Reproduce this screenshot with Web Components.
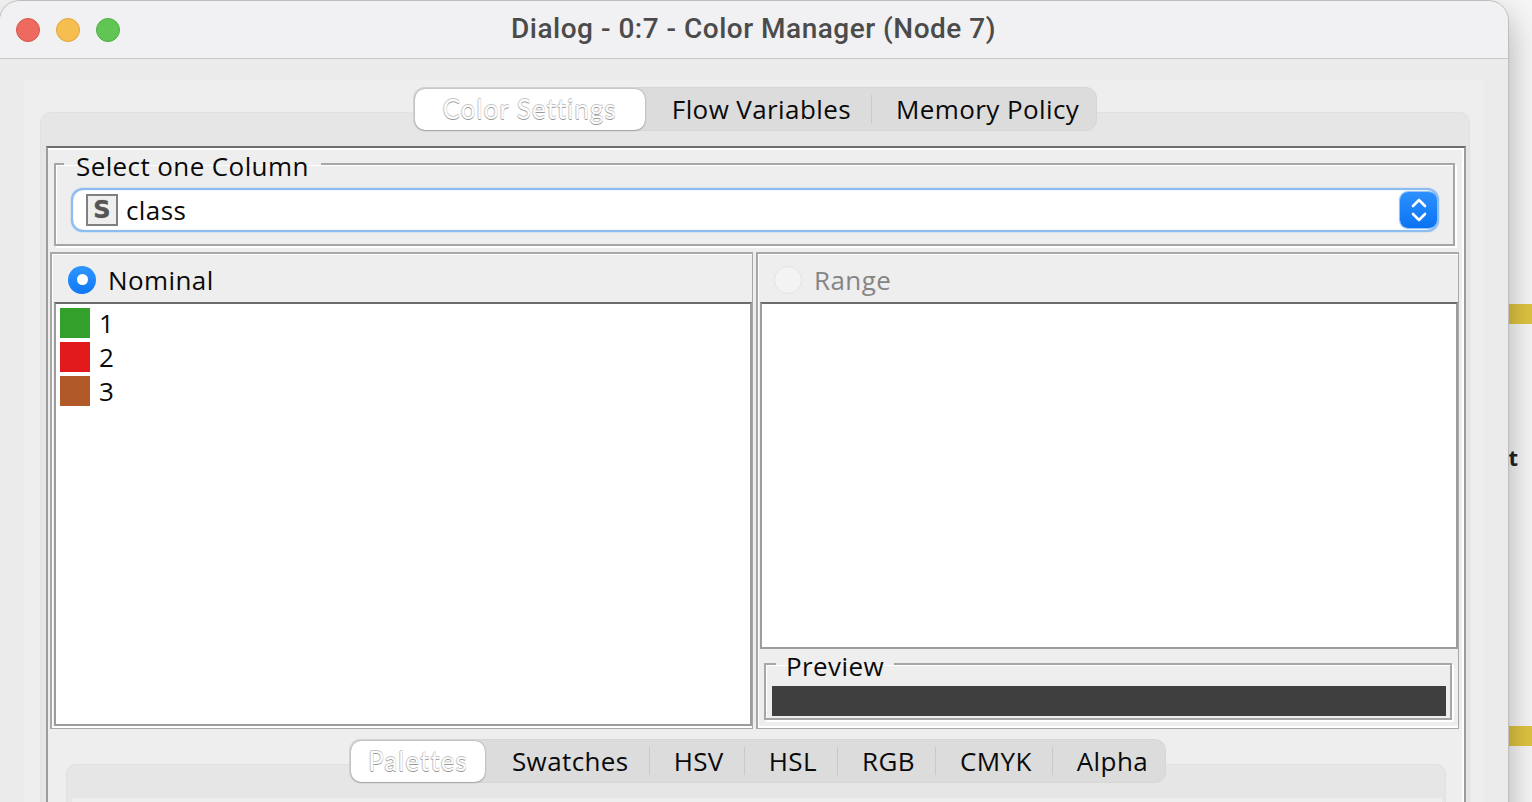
<!DOCTYPE html>
<html lang="en">
<head>
<meta charset="utf-8">
<title>Dialog - 0:7 - Color Manager (Node 7)</title>
<style>
  html, body { margin: 0; height: 802px; overflow: hidden; background: #f6f6f6; }
  body { font: 26px/34px "Open Sans", "Liberation Sans", sans-serif; letter-spacing: 0.4px; color: #0a0a0a; }
</style>
</head>
<body>
<desktop-back>
  <mac-window heading="Dialog - 0:7 - Color Manager (Node 7)">
    <tab-pane tabs="Color Settings|Flow Variables|Memory Policy" selwidth="230" shift="0">
      <inner-frame>
        <group-box label="Select one Column" style="--gl:-7px;--gp:12px;--m:0 9px 0 6px;--pad:9px 14px 12px 15px">
          <column-combo value="class"></column-combo>
        </group-box>
        <split-row>
          <radio-panel label="Nominal" checked>
            <color-row color="#33a02c">1</color-row>
            <color-row color="#e31a1c">2</color-row>
            <color-row color="#b15928">3</color-row>
          </radio-panel>
          <radio-panel label="Range" disabled>
            <group-box slot="footer" label="Preview" style="--gl:4px;--gp:10px;--m:0 6px 6px 4px;--pad:7px 4px 2px 6px">
              <preview-bar></preview-bar>
            </group-box>
          </radio-panel>
        </split-row>
        <tab-pane class="lower" tabs="Palettes|Swatches|HSV|HSL|RGB|CMYK|Alpha" selwidth="134" shift="3" style="margin:10px 18px 0">
          <div style="height:120px;background:#eee"></div>
        </tab-pane>
      </inner-frame>
    </tab-pane>
  </mac-window>
</desktop-back>

<script>
// Fondo de escritorio con restos de otras ventanas a la derecha
class DesktopBack extends HTMLElement {
    constructor() {
        super();
        this.attachShadow({ mode: 'open' });
    }
    connectedCallback() {
        this.shadowRoot.innerHTML = `
            <style>
                :host { display: flex; width: 1532px; height: 802px; overflow: hidden; }
                .main { width: 1508px; flex: none; position: relative; z-index: 1; }
                .side { flex: 1; display: flex; flex-direction: column; overflow: hidden; }
                .bar { height: 20px; background: #dfc441; flex: none; }
                .t { margin: 116px 0 0 -13px; height: 34px; font-weight: 700; font-size: 22px; letter-spacing: 0; color: #222; white-space: nowrap; }
            </style>
            <div class="main"><slot></slot></div>
            <div class="side">
                <div class="bar" style="margin-top:304px"></div>
                <div class="t">ot</div>
                <div class="bar" style="margin-top:252px"></div>
            </div>
        `;
    }
}

// Ventana de macOS con barra de titulo
class MacWindow extends HTMLElement {
    constructor() {
        super();
        this.attachShadow({ mode: 'open' });
    }
    connectedCallback() {
        this.shadowRoot.innerHTML = `
            <style>
                :host {
                    display: block;
                    margin-top: 1px;
                    height: 840px;
                    background: #ebebeb;
                    border-radius: 20px 20px 0 0;
                    box-shadow: 0 0 0 1px #bdbdbd, 0 14px 34px rgba(0, 0, 0, 0.32);
                    overflow: hidden;
                }
                .bar {
                    height: 57px;
                    display: flex;
                    align-items: center;
                    background: #f1f0f2;
                    border-bottom: 1px solid #c9c9c9;
                    padding-left: 16px;
                    gap: 16px;
                }
                .dot { width: 22px; height: 22px; border-radius: 50%; border: 1px solid; }
                .title {
                    flex: 1;
                    margin: -2px 0 0 -137px;
                    text-align: center;
                    font: 500 28px/34px Roboto, sans-serif;
                    letter-spacing: 0.5px;
                    color: #4b4b4b;
                }
                .body { margin: 21px 24px 0; background: #eee; padding-top: 7px; }
            </style>
            <div class="bar">
                <span class="dot" style="background:#ee6a5f;border-color:#d9564b"></span>
                <span class="dot" style="background:#f6be4f;border-color:#dfa63c"></span>
                <span class="dot" style="background:#61c554;border-color:#4fae44"></span>
                <span class="title">${this.getAttribute('heading')}</span>
            </div>
            <div class="body"><slot></slot></div>
        `;
    }
}

// Panel con pestanas segmentadas (Aqua) sobre el borde superior
class TabPane extends HTMLElement {
    constructor() {
        super();
        this.attachShadow({ mode: 'open' });
    }
    connectedCallback() {
        const tabs = this.getAttribute('tabs').split('|');
        const selWidth = this.getAttribute('selwidth');
        const shift = this.getAttribute('shift') || 0;
        const items = tabs.map((name, i) => {
            if (i === 0) return `<span class="tab sel" style="width:${selWidth}px">${name}</span>`;
            const cls = i === tabs.length - 1 ? 'tab last' : (i === 1 ? 'tab first' : 'tab');
            return `<span class="${cls}">${name}</span>`;
        }).join('');
        this.shadowRoot.innerHTML = `
            <style>
                :host { display: block; margin: 0 14px 0 16px; }
                .head { display: flex; justify-content: center; margin-bottom: -19px; position: relative; z-index: 1; padding-left: ${shift}px; }
                .seg {
                    display: flex;
                    align-items: center;
                    height: 40px;
                    padding: 1px;
                    background: #dcdcdc;
                    border: 1px solid #d6d6d6;
                    border-radius: 11px;
                }
                .tab {
                    display: block;
                    padding: 0 20.5px 0 23.5px;
                    border-right: 1px solid #c9c9c9;
                    line-height: 28px;
                    white-space: nowrap;
                }
                .first { padding-left: 27px; }
                .last { padding-right: 16px; border-right: 0; }
                .sel {
                    margin: -1px 0;
                    padding: 0;
                    height: 41px;
                    line-height: 41px;
                    text-align: center;
                    background: #fff;
                    border: 0;
                    border-radius: 10px;
                    box-shadow: 0 0 2px #8a8a8a, 0 1px 1px #b0b0b0;
                    color: #fdfdfd;
                    font-family: Lato, sans-serif;
                    letter-spacing: 1px;
                    text-shadow: 0 1px 0 #999, 0 -1px 0 #c4c4c4, -1px 0 0 #d0d0d0;
                }
                .pane {
                    background: #e6e6e6;
                    border: 1px solid #e1e1e1;
                    border-radius: 10px 10px 0 0;
                    padding: 33px 3px 0 5px;
                }
            </style>
            <div class="head"><div class="seg">${items}</div></div>
            <div class="pane"><slot></slot></div>
        `;
    }
}

// Marco interior con borde hundido
class InnerFrame extends HTMLElement {
    constructor() {
        super();
        this.attachShadow({ mode: 'open' });
    }
    connectedCallback() {
        this.shadowRoot.innerHTML = `
            <style>
                :host {
                    display: block;
                    background: #eee;
                    border: 2px solid #9c9c9c;
                    border-top-color: #6e6e6e;
                    box-shadow: inset 0 2px 0 #fff, inset -2px 0 0 #fff;
                    padding-top: 1px;
                }
            </style>
            <slot></slot>
        `;
    }
}

// Grupo con titulo sobre el borde (fieldset + legend)
class GroupBox extends HTMLElement {
    constructor() {
        super();
        this.attachShadow({ mode: 'open' });
    }
    connectedCallback() {
        this.shadowRoot.innerHTML = `
            <style>
                :host { display: block; margin: var(--m); }
                fieldset {
                    margin: 0;
                    padding: var(--pad);
                    border: 2px solid #a6a6a6;
                    box-shadow: 2px 2px 0 #fff, inset 1px 1px 0 #fff;
                }
                legend {
                    margin-left: var(--gl);
                    padding: 4px var(--gp) 0;
                    line-height: 26px;
                }
            </style>
            <fieldset>
                <legend>${this.getAttribute('label')}</legend>
                <slot></slot>
            </fieldset>
        `;
    }
}

// Combo de columnas con el icono de tipo S y el stepper azul
class ColumnCombo extends HTMLElement {
    constructor() {
        super();
        this.attachShadow({ mode: 'open' });
    }
    connectedCallback() {
        this.shadowRoot.innerHTML = `
            <style>
                :host {
                    display: flex;
                    align-items: center;
                    height: 40px;
                    background: #fff;
                    border: 2px solid #8cbcf0;
                    border-radius: 12px;
                    padding-left: 13px;
                    box-shadow: 0 0 1.5px #8cbcf0, inset 0 0 1px #8cbcf0;
                }
                .type {
                    width: 28px;
                    height: 28px;
                    border: 2px solid #808080;
                    background: #efefef;
                    flex: none;
                    color: #555;
                    font: 700 24px/28px "DejaVu Sans", sans-serif;
                    letter-spacing: 0;
                    text-align: center;
                    text-shadow: 0 0 1px #888;
                }
                .val { flex: 1; margin-left: 8px; }
                .step {
                    width: 37px;
                    height: 36px;
                    border-radius: 8px;
                    background: linear-gradient(#2c90ff, #0a73f2);
                    box-shadow: 0 0 1px 1px #8fbdf0;
                    display: flex;
                    align-items: center;
                    justify-content: center;
                }
            </style>
            <span class="type">S</span>
            <span class="val">${this.getAttribute('value')}</span>
            <span class="step">
                <svg width="16" height="26" viewBox="0 0 16 26" fill="none" stroke="#fff" stroke-width="2.6" stroke-linecap="round" stroke-linejoin="round">
                    <path d="M2 9l6-6 6 6"/><path d="M2 17l6 6 6-6"/>
                </svg>
            </span>
        `;
    }
}

class SplitRow extends HTMLElement {
    constructor() {
        super();
        this.attachShadow({ mode: 'open' });
    }
    connectedCallback() {
        this.shadowRoot.innerHTML = `
            <style>
                :host {
                    display: grid;
                    grid-template-columns: 703px 703px;
                    gap: 3px;
                    height: 477px;
                    margin: 6px 0 0 2px;
                }
            </style>
            <slot></slot>
        `;
    }
}

// Panel con radio en la cabecera y lista debajo
class RadioPanel extends HTMLElement {
    constructor() {
        super();
        this.attachShadow({ mode: 'open' });
    }
    connectedCallback() {
        const disabled = this.hasAttribute('disabled');
        const checked = this.hasAttribute('checked');
        this.shadowRoot.innerHTML = `
            <style>
                :host {
                    display: flex;
                    flex-direction: column;
                    min-height: 0;
                    border: 2px solid #a8a8a8;
                    border-right-width: 1px;
                    border-bottom-width: 1px;
                    box-shadow: inset 1px 1px 0 #fff, inset 0 -2px 0 #fff;
                    padding: 1px 0 2px 2px;
                }
                .head {
                    height: 47px;
                    box-sizing: border-box;
                    padding: 2px 0 0 14px;
                    flex: none;
                    display: flex;
                    align-items: center;
                    gap: 12px;
                    color: ${disabled ? '#858585' : 'inherit'};
                    font-weight: ${disabled ? 500 : 400};
                }
                .radio {
                    width: 28px;
                    height: 28px;
                    border-radius: 50%;
                    box-sizing: border-box;
                    flex: none;
                    display: flex;
                    align-items: center;
                    justify-content: center;
                }
                .on { background: linear-gradient(#2f96ff, #0f78f5); }
                .on::after { content: ""; width: 11px; height: 11px; border-radius: 50%; background: #fff; }
                .off { background: #f3f3f3; border: 1px solid #e2e2e2; }
                .list {
                    flex: 1;
                    min-height: 0;
                    background: #fff;
                    border: 2px solid #9c9c9c;
                    border-top-color: #6c6c6c;
                    padding: 4px 0 0 4px;
                }
            </style>
            <div class="head">
                <span class="radio ${checked ? 'on' : 'off'}"></span>
                <span>${this.getAttribute('label')}</span>
            </div>
            <div class="list"><slot></slot></div>
            <slot name="footer"></slot>
        `;
    }
}

class ColorRow extends HTMLElement {
    constructor() {
        super();
        this.attachShadow({ mode: 'open' });
    }
    connectedCallback() {
        this.shadowRoot.innerHTML = `
            <style>
                :host { display: flex; align-items: center; gap: 9px; height: 30px; margin-bottom: 4px; }
                .swatch { width: 30px; height: 30px; background: ${this.getAttribute('color')}; }
            </style>
            <span class="swatch"></span><slot></slot>
        `;
    }
}

class PreviewBar extends HTMLElement {
    constructor() {
        super();
        this.attachShadow({ mode: 'open' });
    }
    connectedCallback() {
        this.shadowRoot.innerHTML = `
            <style>
                :host { display: block; height: 30px; background: #3f3f3f; }
            </style>
        `;
    }
}

customElements.define('desktop-back', DesktopBack);
customElements.define('mac-window', MacWindow);
customElements.define('tab-pane', TabPane);
customElements.define('inner-frame', InnerFrame);
customElements.define('group-box', GroupBox);
customElements.define('column-combo', ColumnCombo);
customElements.define('split-row', SplitRow);
customElements.define('radio-panel', RadioPanel);
customElements.define('color-row', ColorRow);
customElements.define('preview-bar', PreviewBar);
</script>
</body>
</html>
